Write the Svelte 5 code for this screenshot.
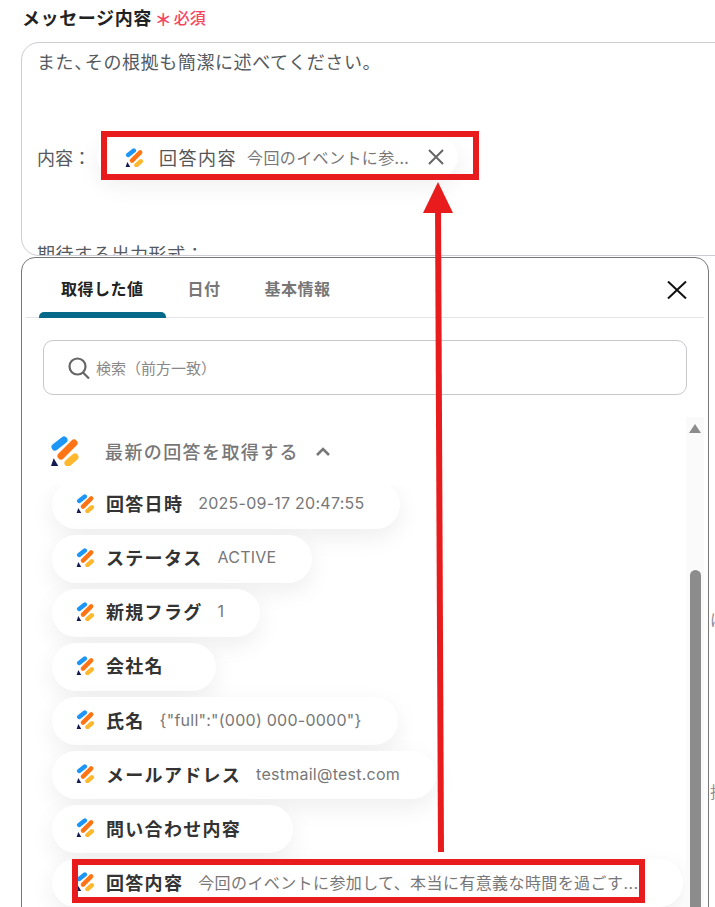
<script>
  // Variable picker screenshot: message field with the picker panel open below it
  let tabs = [
    { label: "取得した値", active: true },
    { label: "日付" },
    { label: "基本情報" }
  ];

  let chips = [
    { name: "回答日時", value: "2025-09-17 20:47:55" },
    { name: "ステータス", value: "ACTIVE" },
    { name: "新規フラグ", value: "1" },
    { name: "会社名", value: "" },
    { name: "氏名", value: '{"full":"(000) 000-0000"}' },
    { name: "メールアドレス", value: "testmail@test.com" },
    { name: "問い合わせ内容", value: "" },
    { name: "回答内容", value: "今回のイベントに参加して、本当に有意義な時間を過ごす...", wide: true }
  ];
</script>

{#snippet logo(size)}
  <svg class="logo" width={size} height={size} viewBox="0 0 30 30" fill="none" stroke-width="7" stroke-linecap="round">
    <path d="M5 11L14 4" stroke="#1e96f5"/>
    <path d="M11 20L24 7" stroke="#ff7414"/>
    <path d="M18 27L25 21" stroke="#ffb82e"/>
    <path d="M1 30H8.3L3.7 22.3Z" fill="#14194f"/>
  </svg>
{/snippet}

<div class="page">
  <div class="field-label">
    <span class="label-text">メッセージ内容</span>
    <span class="asterisk">＊</span>
    <span class="required">必須</span>
  </div>

  <div class="message-box">
    <div class="line"><span>また<span class="tight">、</span>その根拠も簡潔に述べてください。</span></div>
    <div class="line"></div>
    <div class="line"></div>
    <div class="line">
      <span class="token-label">内容：</span>
      <span class="token">
        {@render logo(19)}
        <span class="token-name">回答内容</span>
        <span class="token-value">今回のイベントに参...</span>
        <svg class="token-close" width="16" height="16" viewBox="0 0 16 16" stroke="#666" stroke-width="2" fill="none">
          <path d="M1 1L15 15M15 1L1 15"/>
        </svg>
      </span>
    </div>
    <div class="line"></div>
    <div class="line"></div>
    <div class="line">期待する出力形式：</div>
  </div>

  <div class="lower">
    <section class="panel">
      <div class="tabs">
        {#each tabs as tab}
          <div class="tab" class:active={tab.active}>{tab.label}</div>
        {/each}
        <svg class="panel-close" width="20" height="18" viewBox="0 0 20 18" stroke="#111" stroke-width="2" fill="none">
          <path d="M1 0.5L19 17.5M19 0.5L1 17.5"/>
        </svg>
      </div>

      <div class="search">
        <svg width="22" height="22" viewBox="0 0 22 22" fill="none" stroke="#666" stroke-width="2.2">
          <circle cx="9.5" cy="9.5" r="8"/>
          <path d="M15 15.5L21 21.5"/>
        </svg>
        <span>検索（前方一致）</span>
      </div>

      <div class="results">
        <div class="results-main">
          <div class="group-head">
            {@render logo(30)}
            <span class="group-title">最新の回答を取得する</span>
            <svg width="16" height="10" viewBox="0 0 16 10" fill="none" stroke="#777" stroke-width="2.6">
              <path d="M2 9L8 3L14 9"/>
            </svg>
          </div>
          <div class="chip-list">
            {#each chips as chip}
              <div class="chip" class:wide={chip.wide} class:empty={!chip.value}>
                {@render logo(19)}
                <span class="chip-name">{chip.name}</span>
                {#if chip.value}
                  <span class="chip-value">{chip.value}</span>
                {/if}
              </div>
            {/each}
          </div>
        </div>
        <div class="scrollbar">
          <span class="scroll-up"></span>
          <span class="scroll-thumb"></span>
        </div>
      </div>
    </section>

    <div class="behind">
      <span class="behind-one">は</span>
      <span class="behind-two">指</span>
    </div>
  </div>

  <!-- red annotations drawn over the screenshot -->
  <div class="mark mark-top"></div>
  <div class="mark mark-bottom"></div>
  <svg class="arrow" width="715" height="907" viewBox="0 0 715 907">
    <path d="M438 205L441 852" stroke="#e81c1c" stroke-width="6" fill="none"/>
    <path d="M438 182L453 213H423Z" fill="#e81c1c"/>
  </svg>
</div>

<style>
  :global(body) {
    margin: 0;
    background: #fff;
  }

  .page {
    position: relative;
    width: 715px;
    height: 907px;
    overflow: hidden;
    background: #fff;
    font-family: "Noto Sans CJK JP", "Noto Sans", sans-serif;
    color: #333;
  }

  .logo {
    flex-shrink: 0;
  }

  .field-label {
    display: flex;
    align-items: center;
    height: 34px;
    padding-left: 22px;
  }

  .label-text {
    font-size: 18px;
    font-weight: 700;
    color: #222;
    letter-spacing: 0.6px;
  }

  .asterisk {
    margin-left: 3px;
    font-size: 17px;
    font-weight: 700;
    line-height: 24px;
    padding-top: 3px;
    color: #f4475f;
  }

  .required {
    margin-left: 2px;
    font-size: 16px;
    font-weight: 500;
    color: #f4475f;
  }

  .message-box {
    box-sizing: border-box;
    width: 730px;
    height: 214px;
    margin: 8px 0 0 21px;
    padding: 2px 15px 0;
    border: 1px solid #ccccd2;
    border-radius: 18px;
    overflow: hidden;
    font-size: 18px;
    color: #555a60;
  }

  .line {
    display: flex;
    align-items: center;
    height: 32px;
    white-space: nowrap;
    letter-spacing: 0.6px;
  }

  .tight {
    letter-spacing: -7.4px;
  }

  .token-label {
    letter-spacing: 0;
  }

  .token {
    display: flex;
    align-items: center;
    flex-shrink: 0;
    box-sizing: border-box;
    width: 361px;
    height: 40px;
    margin-left: 6px;
    padding: 0 14px 0 28px;
    border-radius: 20px;
    background: #fff;
    box-shadow: 0 8px 24px rgba(0, 0, 0, 0.07);
    letter-spacing: 0;
  }

  .token-name {
    margin-left: 15px;
    font-size: 18px;
    letter-spacing: 1.5px;
    color: #555;
  }

  .token-value {
    margin-left: 10px;
    font-size: 16px;
    letter-spacing: 0.4px;
    color: #777;
  }

  .token-close {
    margin-left: auto;
  }

  .lower {
    display: flex;
    height: 650px;
    margin-top: 1px;
    padding-left: 21px;
  }

  .panel {
    box-sizing: border-box;
    flex: none;
    width: 688px;
    height: 680px;
    padding: 0 4px;
    background: #fff;
    border: 1px solid #777;
    border-radius: 14px;
  }

  .tabs {
    display: flex;
    align-items: flex-start;
    height: 59px;
    padding-left: 13px;
    border-bottom: 1px solid #e4e4e8;
  }

  .tab {
    box-sizing: border-box;
    height: 60px;
    padding: 18px 22px 0;
    font-size: 16px;
    font-weight: 700;
    letter-spacing: 0.5px;
    color: #777;
    line-height: 24px;
  }

  .tab.active {
    position: relative;
    color: #222;
  }

  .tab.active::after {
    content: "";
    position: absolute;
    left: 0;
    right: 0;
    bottom: 0;
    height: 6px;
    border-radius: 5px 5px 0 0;
    background: #07698a;
  }

  .panel-close {
    margin: 23px 17px 0 auto;
  }

  .search {
    display: flex;
    align-items: center;
    box-sizing: border-box;
    height: 55px;
    margin: 22px 17px 0;
    padding-left: 24px;
    border: 1px solid #c8c8cc;
    border-radius: 10px;
    font-size: 15px;
    color: #888;
  }

  .search span {
    margin-left: 6px;
  }

  .results {
    display: flex;
    margin-top: 22px;
  }

  .results-main {
    flex: 1;
    min-width: 0;
  }

  .group-head {
    display: flex;
    align-items: center;
    height: 68px;
    padding-left: 24px;
    position: relative;
    z-index: 1;
    background: #fff;
  }

  .group-title {
    margin-left: 25px;
    font-size: 18px;
    font-weight: 500;
    letter-spacing: 1.4px;
    color: #777;
  }

  .group-head svg:last-child {
    margin-left: 16px;
  }

  .chip-list {
    display: flex;
    flex-direction: column;
    align-items: flex-start;
    gap: 6.15px;
    margin-top: -4.5px;
    padding-left: 26px;
  }

  .chip {
    display: flex;
    align-items: center;
    flex-shrink: 0;
    box-sizing: border-box;
    height: 48px;
    padding: 0 36px 3px 24px;
    border-radius: 24px;
    background: #fff;
    box-shadow: 0 8px 24px rgba(0, 0, 0, 0.07);
    white-space: nowrap;
  }

  .chip.empty {
    padding-right: 52px;
  }

  .chip.wide {
    width: 631px;
  }

  .chip-name {
    margin-left: 11px;
    font-size: 18px;
    font-weight: 700;
    letter-spacing: 1.3px;
    color: #333;
  }

  .chip-value {
    margin-left: 15px;
    font-family: Inter, "Noto Sans CJK JP", sans-serif;
    font-size: 16px;
    letter-spacing: 0.25px;
    color: #777;
  }

  .chip.wide .chip-value {
    letter-spacing: 0.4px;
  }

  .scrollbar {
    flex: none;
    display: flex;
    flex-direction: column;
    align-items: center;
    width: 18px;
    height: 490px;
    background: #fafafa;
  }

  .scroll-up {
    margin-top: 7px;
    width: 0;
    height: 0;
    border-left: 6px solid transparent;
    border-right: 6px solid transparent;
    border-bottom: 9px solid #8c8c8c;
  }

  .scroll-thumb {
    width: 11px;
    height: 340px;
    margin-top: 137px;
    border-radius: 6px 6px 0 0;
    background: #8c8c8c;
  }

  .behind {
    flex: none;
    width: 7px;
    overflow: hidden;
    font-size: 16px;
    line-height: 20px;
    color: #8a8f99;
  }

  .behind-one,
  .behind-two {
    display: block;
    padding-left: 1px;
  }

  .behind-one {
    margin-top: 352px;
  }

  .behind-two {
    margin-top: 152px;
  }

  .mark {
    position: absolute;
    z-index: 2;
    box-sizing: border-box;
    border: 6px solid #e81c1c;
  }

  .mark-top {
    left: 101px;
    top: 131px;
    width: 378px;
    height: 49px;
  }

  .mark-bottom {
    left: 72px;
    top: 859px;
    width: 573px;
    height: 44px;
  }

  .arrow {
    position: absolute;
    z-index: 2;
    left: 0;
    top: 0;
    pointer-events: none;
  }
</style>
